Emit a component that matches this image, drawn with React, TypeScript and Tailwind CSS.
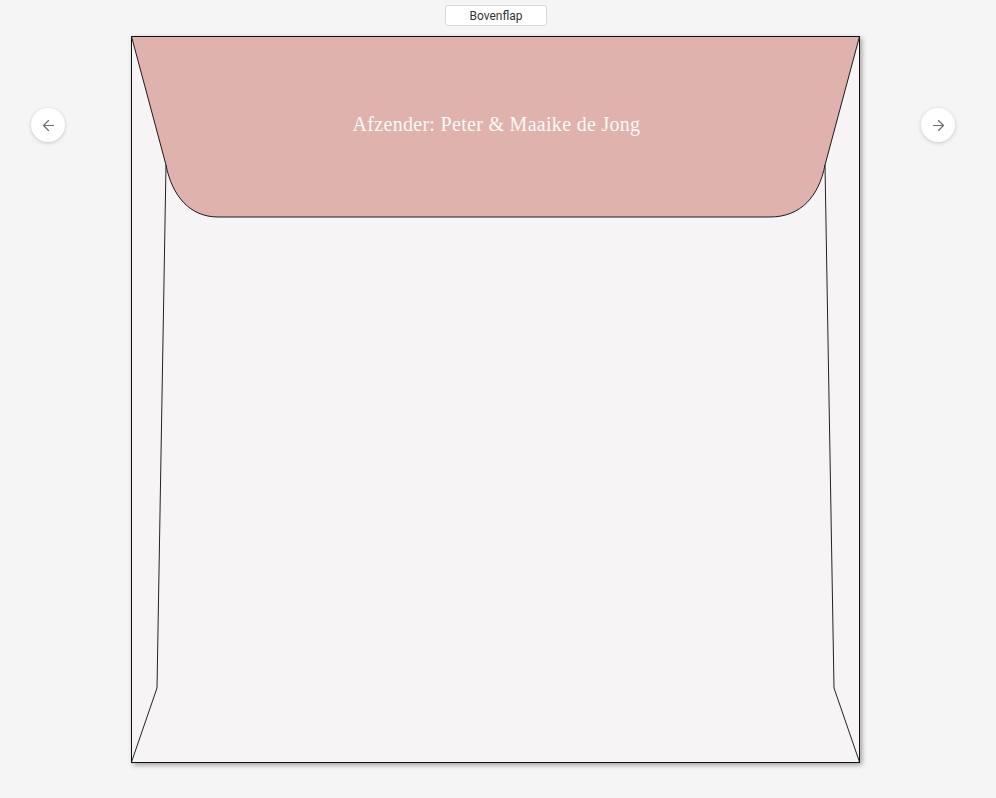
import { ArrowLeft, ArrowRight } from 'lucide-react';

function RoundButton({ children }: { children: React.ReactNode }) {
  return (
    <button
      type="button"
      className="w-[34px] h-[34px] rounded-full bg-white shadow-[0_1px_4px_rgba(0,0,0,0.18)] flex items-center justify-center text-[#6f6f6f]"
    >
      {children}
    </button>
  );
}

function Envelope() {
  return (
    <div className="relative w-[729px] h-[727px] bg-[#f6f4f5] shadow-[2px_2px_5px_rgba(0,0,0,0.35)]">
      <svg className="absolute inset-0" width="729" height="727" viewBox="0 0 729 727" fill="none">
        <path
          d="M0.5 0.5 L728.5 0.5 L694 129 C688 160 670 181 639 181 L87 181 C59 181 41 160 35 129 Z"
          fill="#e0b2ae"
          stroke="#1a1a1a"
          strokeWidth="1"
        />
        <path d="M35 129 L26 652 L0.5 726" stroke="#222" strokeWidth="1" />
        <path d="M694 129 L703 652 L728.5 726" stroke="#222" strokeWidth="1" />
        <rect x="0.5" y="0.5" width="728" height="726" stroke="#111" strokeWidth="1" />
      </svg>
      <div className="absolute left-0 right-0 top-[75px] pl-[2px] text-center text-[#fdf8f4] text-[20px] leading-[26px] font-['Liberation_Serif',serif] tracking-[0.3px]">
        Afzender: Peter &amp; Maaike de Jong
      </div>
    </div>
  );
}

export default function App() {
  return (
    <div className="w-[996px] h-[798px] bg-[#f5f5f6] font-['Roboto',sans-serif] overflow-hidden">
      <div className="flex justify-center pt-[5px]">
        <button
          type="button"
          className="w-[102px] h-[21px] mr-[4px] bg-white border border-[#d9d9d9] rounded-[3px] text-[12px] text-[#333] leading-none"
        >
          Bovenflap
        </button>
      </div>
      <div className="flex items-start mt-[10px]">
        <div className="ml-[31px] mt-[72px]">
          <RoundButton>
            <ArrowLeft size={17} strokeWidth={1.75} />
          </RoundButton>
        </div>
        <div className="ml-[66px]">
          <Envelope />
        </div>
        <div className="ml-[61px] mt-[72px]">
          <RoundButton>
            <ArrowRight size={17} strokeWidth={1.75} />
          </RoundButton>
        </div>
      </div>
    </div>
  );
}
